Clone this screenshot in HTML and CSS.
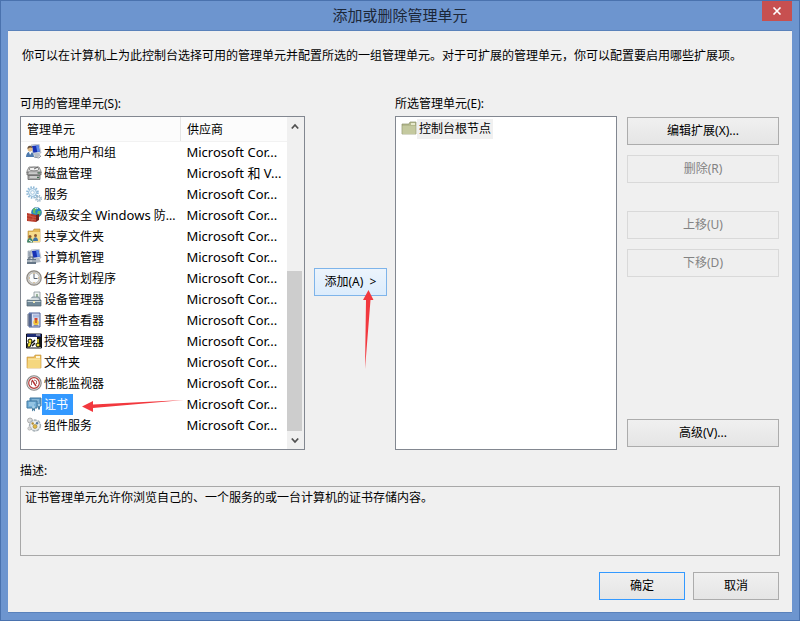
FILE: index.html
```
<!DOCTYPE html>
<html lang="zh-CN">
<head>
<meta charset="utf-8">
<title>添加或删除管理单元</title>
<link rel="stylesheet" href="styles.css">
</head>
<body>
<div class="window">
  <header class="titlebar">
    <h1>添加或删除管理单元</h1>
    <button class="close" type="button" aria-label="关闭"><svg width="10" height="8" viewBox="0 0 10 8"><path d="M1.500 .5l7 7M8.500 .5l-7 7" stroke="#fff" stroke-width="1.600"/></svg></button>
  </header>
  <main class="content">
    <p class="intro">你可以在计算机上为此控制台选择可用的管理单元并配置所选的一组管理单元。对于可扩展的管理单元，你可以配置要启用哪些扩展项。</p>
    <div class="picker">
      <h2 class="label label-available" id="available">可用的管理单元(S):</h2>
      <h2 class="label label-selected" id="selected">所选管理单元(E):</h2>
      <div class="box available">
        <table aria-labelledby="available">
          <thead><tr><th>管理单元</th><th>供应商</th></tr></thead>
          <tbody>
            <tr><td><div class="item">
              <svg class="icon" viewBox="0 0 16 16"><path d="M5 1l8-1 2 9-8 1z" fill="#d7dde5" stroke="#9aa5b4" stroke-width=".6"/><path d="M6 2l6.500-.8 1.300 6.600-6.500 1z" fill="#1731b4"/><path d="M10 1.500l2.500-.3 1.300 6.600-2.500.3z" fill="#5e8bea"/><path d="M8 10l5-1 2 3-6 2z" fill="#b6bdc6"/><circle cx="4" cy="5" r="2.500" fill="#e4bd88"/><path d="M1.500 5C1 1 6 1 6.500 4L4 3.500z" fill="#66503c"/><path d="M0 13c0-7 8-7 8 0z" fill="#4b78ad"/><path d="M3 8l1 3 2-3z" fill="#fff"/><path d="M8 13l5 1 2-2" stroke="#8d96a3" fill="none"/></svg><span class="name">本地用户和组</span></div></td><td>Microsoft Cor...</td></tr>
            <tr><td><div class="item">
              <svg class="icon" viewBox="0 0 16 16"><path d="M3 2h10l2 4v2H1V6z" fill="#d8d8d8" stroke="#777" stroke-width=".8"/><ellipse cx="8" cy="4" rx="5" ry="1.800" fill="#f4f4f4" stroke="#777" stroke-width=".8"/><path d="M1 7h14v3H1zM2 10.500h12v4H2z" fill="#a8a8a8" stroke="#666" stroke-width=".8"/><path d="M3 8h8M4 12h7" stroke="#eee"/><path d="M12 8h2M11 12.500h2" stroke="#3e6f4c"/><path d="M8 4l4-2" stroke="#666"/></svg><span class="name">磁盘管理</span></div></td><td>Microsoft 和 V...</td></tr>
            <tr><td><div class="item">
              <svg class="icon" viewBox="0 0 16 16"><circle cx="6.500" cy="6.500" r="5.300" fill="none" stroke="#8db7d6" stroke-width="2" stroke-dasharray="1.500 1.270"/><circle cx="6.500" cy="6.500" r="4" fill="#e4f2fb" stroke="#8db7d6"/><circle cx="6.500" cy="6.500" r="1.800" fill="#fff" stroke="#a9c9df"/><circle cx="12.500" cy="12.500" r="2.800" fill="none" stroke="#87a7bc" stroke-width="1.300" stroke-dasharray="1.200 1"/><circle cx="12.500" cy="12.500" r="1.700" fill="#fff" stroke="#8daec4"/></svg><span class="name">服务</span></div></td><td>Microsoft Cor...</td></tr>
            <tr><td><div class="item">
              <svg class="icon" viewBox="0 0 16 16"><circle cx="10.500" cy="5.500" r="5" fill="#2587c5" stroke="#286486" stroke-width=".5"/><path d="M7 2q3-2 4 0l-2 2 1 3-3-1zM12 4l3 0-1 4-3-1z" fill="#65bd62"/><path d="M9 1.500q2-1 3 0" stroke="#d8f4ff" fill="none"/><path d="M1 6l9 2v7l-9-1z" fill="#b83827"/><path d="M10 8l3-1v6l-3 2z" fill="#76251d"/><path d="M1 8.500l9 2M1 11.500l9 1.500M4 6.500v2.500M7 10v2.500M3 12v2M6 12.500v2" stroke="#d5705c" stroke-width=".6"/></svg><span class="name">高级安全 <span class="latin">Windows</span> 防...</span></div></td><td>Microsoft Cor...</td></tr>
            <tr><td><div class="item">
              <svg class="icon" viewBox="0 0 16 16"><path d="M2 3h5l1-2h6v13H2z" fill="#e4b957" stroke="#b68a35" stroke-width=".6"/><path d="M3 4h11v10H3z" fill="#f6dc8b"/><circle cx="4" cy="8.500" r="1.500" fill="#8a5a31"/><path d="M1 14.500c0-6 6-6 6 0z" fill="#42866b"/><circle cx="9.500" cy="7.500" r="1.500" fill="#8a5a31"/><path d="M7 13c0-5 5-5 5 0z" fill="#3f75a6"/><path d="M3 12l3 2" stroke="#fff"/></svg><span class="name">共享文件夹</span></div></td><td>Microsoft Cor...</td></tr>
            <tr><td><div class="item">
              <svg class="icon" viewBox="0 0 16 16"><path d="M5 1l8-1 2 9-8 1z" fill="#d7dde5" stroke="#9aa5b4" stroke-width=".6"/><path d="M6 2l6.500-.8 1.300 6.600-6.500 1z" fill="#1731b4"/><path d="M10 1.500l2.500-.3 1.300 6.600-2.500.3z" fill="#5e8bea"/><path d="M2 2h3v8H2z" fill="#c9d0d7" stroke="#778594" stroke-width=".5"/><path d="M2.500 4h2M2.500 6h2" stroke="#64748a"/><path d="M8 10l5-1 2 4-6 1z" fill="#b6bdc6"/><path d="M1 10h9v5H1z" fill="#657687"/><path d="M3 10V8h4v2" stroke="#53606e" fill="none"/><path d="M1 12h9M5 11v2" stroke="#e2e5e8"/></svg><span class="name">计算机管理</span></div></td><td>Microsoft Cor...</td></tr>
            <tr><td><div class="item">
              <svg class="icon" viewBox="0 0 16 16"><circle cx="8" cy="8" r="7.200" fill="#d5d2cb" stroke="#8b8782" stroke-width="1.200"/><circle cx="8" cy="8" r="5.300" fill="#fafbfc" stroke="#aaa" stroke-width=".7"/><path d="M8 4v4.500h3.500" stroke="#5b6474" fill="none"/><path d="M8 3v1M8 12v1M3 8h1M12 8h1" stroke="#c49a53"/></svg><span class="name">任务计划程序</span></div></td><td>Microsoft Cor...</td></tr>
            <tr><td><div class="item">
              <svg class="icon" viewBox="0 0 16 16"><path d="M8 1h6v8H8z" fill="#eff2f2" stroke="#89949b" stroke-width=".8"/><path d="M10 3h2v3h-2z" fill="#9bb59c"/><path d="M6 6h7l1 3H5z" fill="#b6c2c9" stroke="#748590" stroke-width=".7"/><path d="M1 9h14v6H1z" fill="#718998" stroke="#52636f" stroke-width=".7"/><path d="M3 9l2-2h6l3 2z" fill="#d5dde0"/><path d="M1.500 10.500h13" stroke="#c6d4da"/><path d="M7 10h2v2H7z" fill="#efe9bd"/></svg><span class="name">设备管理器</span></div></td><td>Microsoft Cor...</td></tr>
            <tr><td><div class="item">
              <svg class="icon" viewBox="0 0 16 16"><path d="M3 1h11v14H3z" fill="#dde1f0" stroke="#4b5f97"/><path d="M3 1h3v14H3z" fill="#6379ad"/><path d="M1 3h4M1 5h4M1 7h4M1 9h4M1 11h4M1 13h4" stroke="#3e4858" stroke-width=".8"/><path d="M7 2.500h6v3H7z" fill="#a9b9df"/><path d="M8.500 6h3v3h-3z" fill="#d64334"/><circle cx="10" cy="10.500" r="2.700" fill="#f1c63c"/><path d="M10 7.500v3.500" stroke="#ba3624" stroke-width="1.200"/><path d="M7.500 13.700h5" stroke="#6b77a2"/></svg><span class="name">事件查看器</span></div></td><td>Microsoft Cor...</td></tr>
            <tr><td><div class="item">
              <svg class="icon" viewBox="0 0 16 16"><path d="M.5 1h15v14H.5z" fill="#fff" stroke="#101018"/><path d="M1 1h14v3H1z" fill="#1f2e75"/><path d="M10 2h4" stroke="#ddd"/><path d="M11 4h4v10h-4z" fill="#171717"/><circle cx="4" cy="8" r="2" fill="#f5e536" stroke="#111"/><path d="M2 10l-1 4h3l2-5" fill="#eee035" stroke="#111"/><path d="M6 10l3-3M6 13l3-3" stroke="#111" stroke-width="1.500"/><path d="M12 6v5" stroke="#f5e536" stroke-width="1.500"/><circle cx="12" cy="12" r="2" fill="#f5e536" stroke="#111"/></svg><span class="name">授权管理器</span></div></td><td>Microsoft Cor...</td></tr>
            <tr><td><div class="item">
              <svg class="icon" viewBox="0 0 16 16"><path d="M1 3h7l1-2h6v13H1z" fill="#e9ba57" stroke="#c4923b" stroke-width=".6"/><path d="M10 2h4v2h-4z" fill="#fff6d7"/><path d="M2 5h12.500v9H1.500z" fill="#f5d77f"/><path d="M2 5h12" stroke="#fff0b6"/></svg><span class="name">文件夹</span></div></td><td>Microsoft Cor...</td></tr>
            <tr><td><div class="item">
              <svg class="icon" viewBox="0 0 16 16"><circle cx="8" cy="8" r="7.200" fill="#e8e8e8" stroke="#888" stroke-width="1.100"/><circle cx="8" cy="8" r="5.300" fill="#fff" stroke="#b83f3c" stroke-width="1.200"/><path d="M6 5l4 6" stroke="#b62f2f" stroke-width="1.400"/><path d="M5.500 6v4M8 5l2.500 1v3" stroke="#8b4b49" stroke-width=".8" fill="none"/></svg><span class="name">性能监视器</span></div></td><td>Microsoft Cor...</td></tr>
            <tr aria-selected="true"><td><div class="item is-selected">
              <svg class="icon" viewBox="0 0 16 16"><path d="M4 2h11v8H4z" fill="#639dc8" stroke="#41799f"/><path d="M6 4h7M6 6h7" stroke="#a7cee5"/><path d="M1 5h10v7H1z" fill="#73afd8" stroke="#41799f"/><path d="M3 7h6M3 9h5" stroke="#b6daed"/><path d="M6 11v4.500l1.500-1.500L9 15.500V11zM12 9v5l1-1 1 1V9z" fill="#477da0"/><circle cx="7.500" cy="11" r="1.500" fill="#a5cfe7"/><circle cx="13" cy="9" r="1.300" fill="#a5cfe7"/></svg><span class="name">证书</span>
              <svg class="arrow arrow-left" width="104" height="14" viewBox="0 0 104 14"><path d="M1 7.500L12 2v3.500L103 1 12 9v4z" fill="#f2383e"/></svg></div></td><td>Microsoft Cor...</td></tr>
            <tr><td><div class="item">
              <svg class="icon" viewBox="0 0 16 16"><circle cx="4" cy="3.500" r="2.500" fill="#d8dadb" stroke="#999" stroke-width=".7"/><circle cx="9" cy="8.500" r="5.500" fill="#d5dadd" stroke="#a5afb5" stroke-width="1.300" stroke-dasharray="3 1"/><circle cx="9" cy="8.500" r="4.300" fill="#eef0ef"/><circle cx="6.700" cy="6.500" r="1.200" fill="#b58b31"/><circle cx="11" cy="6.300" r="1.200" fill="#597ba0"/><circle cx="9" cy="9.500" r="2" fill="#e2b944" stroke="#947a38" stroke-width=".6"/><circle cx="3.500" cy="11.500" r="1.700" fill="#d9d9d9" stroke="#aaa" stroke-width=".6"/></svg><span class="name">组件服务</span></div></td><td>Microsoft Cor...</td></tr>
          </tbody>
        </table>
        <div class="scrollbar">
          <button type="button" aria-label="向上滚动"><svg width="8" height="7" viewBox="0 0 8 7"><path d="M.8 5.500L4 2l3.200 3.500" fill="none" stroke="#505050" stroke-width="1.800"/></svg></button>
          <div class="track"><div class="thumb"></div></div>
          <button type="button" aria-label="向下滚动"><svg width="8" height="7" viewBox="0 0 8 7"><path d="M.8 1.500L4 5l3.200-3.500" fill="none" stroke="#505050" stroke-width="1.800"/></svg></button>
        </div>
      </div>
      <div class="add-wrap">
        <button class="btn btn-add" type="button">添加(A)&nbsp; &gt;</button>
        <svg class="arrow arrow-up" width="12" height="80" viewBox="0 0 12 80"><path d="M6.500 0l5 10H8.500L3 79 4 10H1z" fill="#f2383e"/></svg>
      </div>
      <div class="box chosen" role="group" aria-labelledby="selected">
        <div class="root"><svg class="icon" viewBox="0 0 16 16"><path d="M1 3h7l1-2h6v12H1z" fill="#b4b98d" stroke="#8c926e" stroke-width=".7"/><path d="M10 2h4v2h-4z" fill="#e6e8cb"/><path d="M1.500 5h13v8h-13z" fill="#c4c99f"/></svg><span class="root-name">控制台根节点</span></div>
      </div>
      <div class="actions">
        <button class="btn" type="button">编辑扩展(X)...</button>
        <button class="btn" type="button" disabled>删除(R)</button>
        <button class="btn group-start" type="button" disabled>上移(U)</button>
        <button class="btn" type="button" disabled>下移(D)</button>
        <button class="btn advanced" type="button">高级(V)...</button>
      </div>
    </div>
    <h2 class="label label-description">描述:</h2>
    <div class="description">证书管理单元允许你浏览自己的、一个服务的或一台计算机的证书存储内容。</div>
    <footer class="footer">
      <button class="btn btn-default" type="button">确定</button>
      <button class="btn" type="button">取消</button>
    </footer>
  </main>
</div>
</body>
</html>
```
FILE: styles.css
```
* { box-sizing: border-box; }

body {
  margin: 0;
  font: 12px/20px "Noto Sans", "Noto Sans CJK SC", sans-serif;
  color: #000;
}

button { font: inherit; color: inherit; }

.window {
  display: flex;
  flex-direction: column;
  min-height: 100vh;
  padding: 0 7px 7px;
  border: 1px solid #4a72ae;
  background: #6d95cf;
}

.titlebar {
  position: relative;
  height: 29px;
  flex: none;
}

.titlebar h1 {
  margin: 0;
  font-size: 15px;
  font-weight: 400;
  line-height: 29px;
  text-align: center;
  color: #1c2738;
}

.close {
  position: absolute;
  top: 0;
  right: 0;
  display: flex;
  align-items: center;
  justify-content: center;
  width: 30px;
  height: 20px;
  padding: 0;
  border: 0;
  background: #c75050;
}

.content {
  flex: 1;
  display: flex;
  flex-direction: column;
  padding: 15px 12px 12px;
  border: 1px solid #5a82bb;
  border-width: 1px 0;
  background: #f0f0f0;
}

.intro { margin: 0 2px 28px; }

.label {
  margin: 0;
  font-size: 12px;
  font-weight: 400;
}

.picker {
  flex: 1;
  display: grid;
  grid-template-columns: 285fr 74px 222fr 154px;
  grid-template-rows: 20px 1fr;
  gap: 2px 8px;
  padding-right: 1px;
}

.label-available { grid-column: 1 / 3; }
.label-selected { grid-column: 3 / 5; }

.box {
  border: 1px solid #828790;
  background: #fff;
}

.available {
  display: flex;
  min-width: 0;
}

table {
  flex: 1;
  min-width: 0;
  align-self: flex-start;
  border-collapse: collapse;
  table-layout: fixed;
}

th {
  height: 24px;
  padding: 2px 6px 0;
  border-bottom: 1px solid #f2f2f2;
  background: #fcfcfc;
  font-weight: 400;
  text-align: left;
}

th:first-child {
  width: 159px;
  border-right: 1px solid #e5e5e5;
}

td {
  height: 21px;
  padding: 0 0 0 6px;
  font-size: 13px;
  line-height: 21px;
  white-space: nowrap;
}

td:first-child {
  padding-left: 5px;
  font-size: 12px;
}

.latin { font-size: 13px; }

.item {
  position: relative;
  display: flex;
  align-items: center;
  height: 21px;
}

.icon {
  flex: none;
  width: 16px;
  height: 16px;
}

.name { padding: 0 5px 0 2px; }

.is-selected .name {
  background: #3399ff;
  color: #fff;
}

.arrow {
  position: absolute;
  z-index: 1;
  pointer-events: none;
}

.arrow-left {
  left: 55px;
  top: 5px;
}

.arrow-up {
  left: 48px;
  top: 22px;
}

.scrollbar {
  display: flex;
  flex-direction: column;
  width: 17px;
  padding-right: 2px;
  background: #f0f0f0;
}

.scrollbar button {
  display: flex;
  align-items: center;
  justify-content: center;
  height: 18px;
  padding: 0;
  border: 0;
  background: #f0f0f0;
}

.track {
  flex: 1;
  display: flex;
  align-items: flex-end;
}

.thumb {
  width: 100%;
  height: 54%;
  background: #cdcdcd;
}

.add-wrap {
  position: relative;
  align-self: center;
  margin: 0 0 2px 1px;
}

.btn {
  height: 28px;
  padding: 0;
  border: 1px solid #acacac;
  background: linear-gradient(#f0f0f0, #e5e5e5);
  line-height: 26px;
}

.btn:disabled {
  border-color: #d9d9d9;
  background: #efefef;
  color: #838383;
}

.btn-add {
  display: block;
  width: 100%;
  border-color: #7eb4ea;
  background: linear-gradient(#ecf4fc, #dcecfc);
}

.root {
  display: flex;
  align-items: center;
  padding: 2px 5px;
}

.root-name {
  padding: 0 2px;
  background: #f0f0f0;
}

.actions {
  display: flex;
  flex-direction: column;
  gap: 10px;
  margin-left: 2px;
  padding: 1px 0 3px;
}

.group-start { margin-top: 18px; }
.advanced { margin-top: auto; }
.label-description { margin: 11px 0 5px; }

.description {
  height: 70px;
  padding: 1px 4px;
  border: 1px solid #a8a8a8;
}

.footer {
  display: flex;
  justify-content: flex-end;
  gap: 8px;
  padding: 16px 1px 0 0;
}

.footer .btn { width: 86px; }

.footer .btn-default {
  border-color: #3399ff;
}
```
